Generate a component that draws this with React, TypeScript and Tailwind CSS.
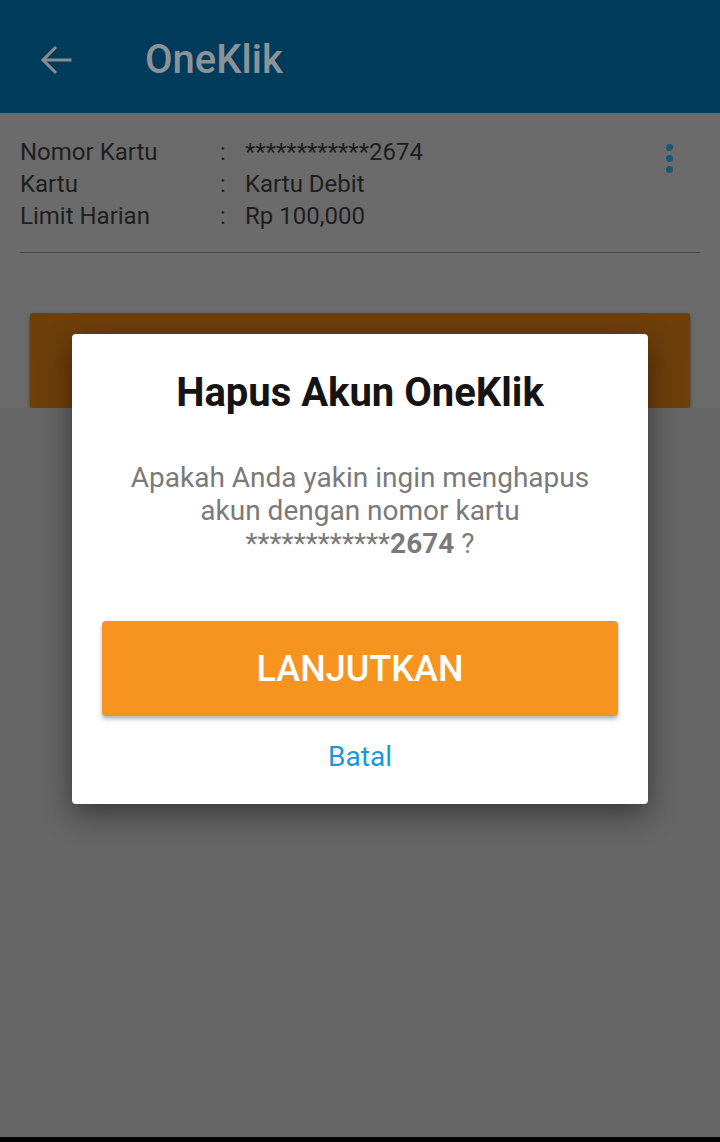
import React from "react";

const font = { fontFamily: "Roboto, 'Noto Sans', sans-serif" };

function InfoRow({ label, value }: { label: string; value: string }) {
  return (
    <div className="flex h-[32px] items-center text-[24px] text-[#1f1f1f]">
      <span className="w-[200px]">{label}</span>
      <span className="w-[25px]">:</span>
      <span>{value}</span>
    </div>
  );
}

export default function App() {
  return (
    <div className="relative flex h-[1142px] w-[720px] flex-col overflow-hidden bg-[#6b6b6b]" style={font}>
      {/* app bar */}
      <div className="flex h-[113px] shrink-0 items-center bg-[#003b5c] pt-[6px]">
        <svg className="ml-[40px] h-[32px] w-[32px]" viewBox="0 0 32 32" fill="none" stroke="#8a8c8e" strokeWidth="3" strokeLinecap="square">
          <path d="M30 16H4" />
          <path d="M15 4L3 16l12 12" />
        </svg>
        <span className="ml-[73px] text-[40px] font-medium leading-none text-[#8c9297]">OneKlik</span>
      </div>

      {/* card info */}
      <div className="relative mx-[20px] mt-[23px] border-b border-[#464646] pb-[20px]">
        <InfoRow label="Nomor Kartu" value="************2674" />
        <InfoRow label="Kartu" value="Kartu Debit" />
        <InfoRow label="Limit Harian" value="Rp 100,000" />
        <div className="absolute right-[27px] top-[8px] flex flex-col gap-[4px]">
          <span className="h-[7px] w-[7px] rounded-full bg-[#1a5878]" />
          <span className="h-[7px] w-[7px] rounded-full bg-[#1a5878]" />
          <span className="h-[7px] w-[7px] rounded-full bg-[#1a5878]" />
        </div>
      </div>

      <div className="mx-[30px] mt-[60px] h-[95px] rounded-[3px] bg-[#6e3f0b] shadow-[0_2px_4px_rgba(0,0,0,0.35)]" />

      <div className="flex-1 bg-[#666666]" />
      <div className="h-[5px] shrink-0 bg-black" />

      {/* dialog */}
      <div className="absolute left-[72px] top-[334px] flex h-[470px] w-[576px] flex-col items-center rounded-[4px] bg-white px-[30px] pt-[38px] shadow-[0_10px_30px_rgba(0,0,0,0.45)]">
        <h2 className="text-[40px] font-bold leading-[42px] text-[#141414]">Hapus Akun OneKlik</h2>
        <p className="mt-[47px] text-center text-[28px] leading-[33px] text-[#7a7a7a]">
          Apakah Anda yakin ingin menghapus
          <br />
          akun dengan nomor kartu
          <br />
          ************<b className="font-bold">2674</b> ?
        </p>
        <button
          type="button"
          className="mt-[61px] h-[95px] w-full rounded-[4px] bg-[#f7941f] text-[36px] font-medium text-white shadow-[0_3px_4px_rgba(0,0,0,0.3)]"
        >
          LANJUTKAN
        </button>
        <button type="button" className="mt-[25px] text-[28px] leading-[32px] text-[#1c98d3]">
          Batal
        </button>
      </div>
    </div>
  );
}
